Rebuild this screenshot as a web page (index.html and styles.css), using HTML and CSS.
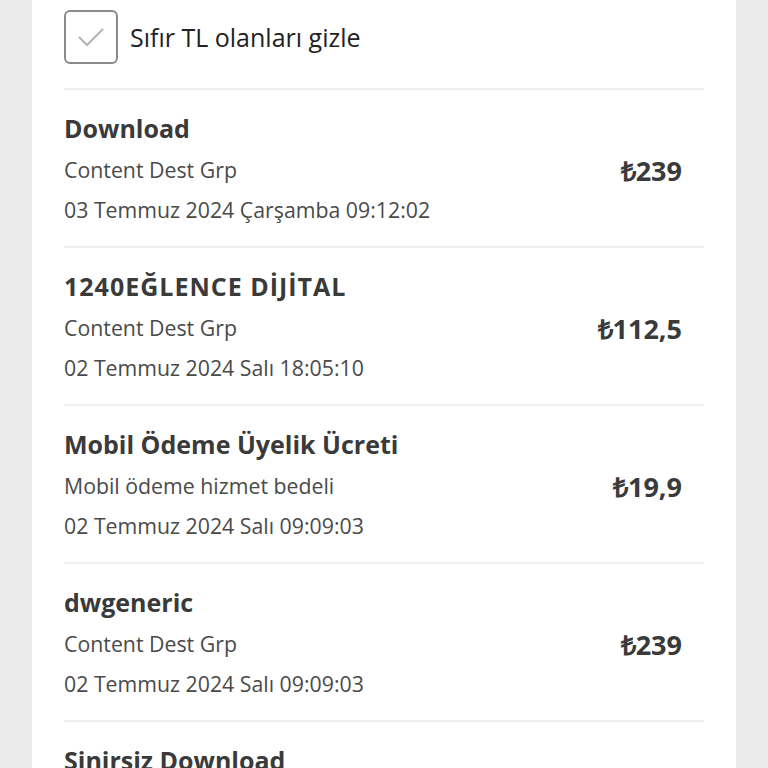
FILE: index.html
```html
<!DOCTYPE html>
<html lang="tr">
<head>
<meta charset="utf-8">
<link rel="stylesheet" href="styles.css">
</head>
<body>
<div class="panel">
  <div class="filter">
    <span class="box">
      <svg width="30" height="22" viewBox="0 0 30 22"><path d="M3 11 L11 19 L27 3" fill="none" stroke="#b4b4b4" stroke-width="2"/></svg>
    </span>
    <span class="filter-label">Sıfır TL olanları gizle</span>
  </div>
  <div class="item">
    <div class="info">
      <div class="title">Download</div>
      <div class="sub">Content Dest Grp</div>
      <div class="date">03 Temmuz 2024 Çarşamba 09:12:02</div>
    </div>
    <div class="price">₺239</div>
  </div>
  <div class="item">
    <div class="info">
      <div class="title caps">1240EĞLENCE DİJİTAL</div>
      <div class="sub">Content Dest Grp</div>
      <div class="date">02 Temmuz 2024 Salı 18:05:10</div>
    </div>
    <div class="price">₺112,5</div>
  </div>
  <div class="item">
    <div class="info">
      <div class="title">Mobil Ödeme Üyelik Ücreti</div>
      <div class="sub">Mobil ödeme hizmet bedeli</div>
      <div class="date">02 Temmuz 2024 Salı 09:09:03</div>
    </div>
    <div class="price">₺19,9</div>
  </div>
  <div class="item">
    <div class="info">
      <div class="title">dwgeneric</div>
      <div class="sub">Content Dest Grp</div>
      <div class="date">02 Temmuz 2024 Salı 09:09:03</div>
    </div>
    <div class="price">₺239</div>
  </div>
  <div class="item">
    <div class="info">
      <div class="title">Sinirsiz Download</div>
    </div>
  </div>
</div>
</body>
</html>
```
FILE: styles.css
```css
html, body {
  margin: 0;
  padding: 0;
  background: #ebebeb;
  height: 768px;
  overflow: hidden;
}
body {
  font-family: "Open Sans", "Liberation Sans", sans-serif;
  color: #333;
}
.panel {
  margin: 0 32px;
  background: #fff;
  padding: 0 32px;
  min-height: 768px;
}
.filter {
  display: flex;
  align-items: center;
  gap: 12px;
  padding: 10px 0 24px;
  border-bottom: 2px solid #eeeeee;
}
.box {
  width: 50px;
  height: 50px;
  border: 2px solid #8a8a8a;
  border-radius: 6px;
  display: flex;
  align-items: center;
  justify-content: center;
}
.filter-label {
  font-size: 25px;
  color: #222;
}
.item {
  display: flex;
  align-items: center;
  justify-content: space-between;
  padding: 20px 0 16px;
  border-bottom: 2px solid #eeeeee;
}
.title {
  font-size: 25px;
  font-weight: 700;
  line-height: 36px;
  margin-bottom: 4px;
  color: #3a3a3a;
}
.caps {
  letter-spacing: 1px;
}
.sub, .date {
  font-size: 21.3px;
  line-height: 40px;
  color: #4a4a4a;
}
.price {
  font-size: 27px;
  font-weight: 700;
  color: #3a3a3a;
  padding-right: 22px;
}
```
